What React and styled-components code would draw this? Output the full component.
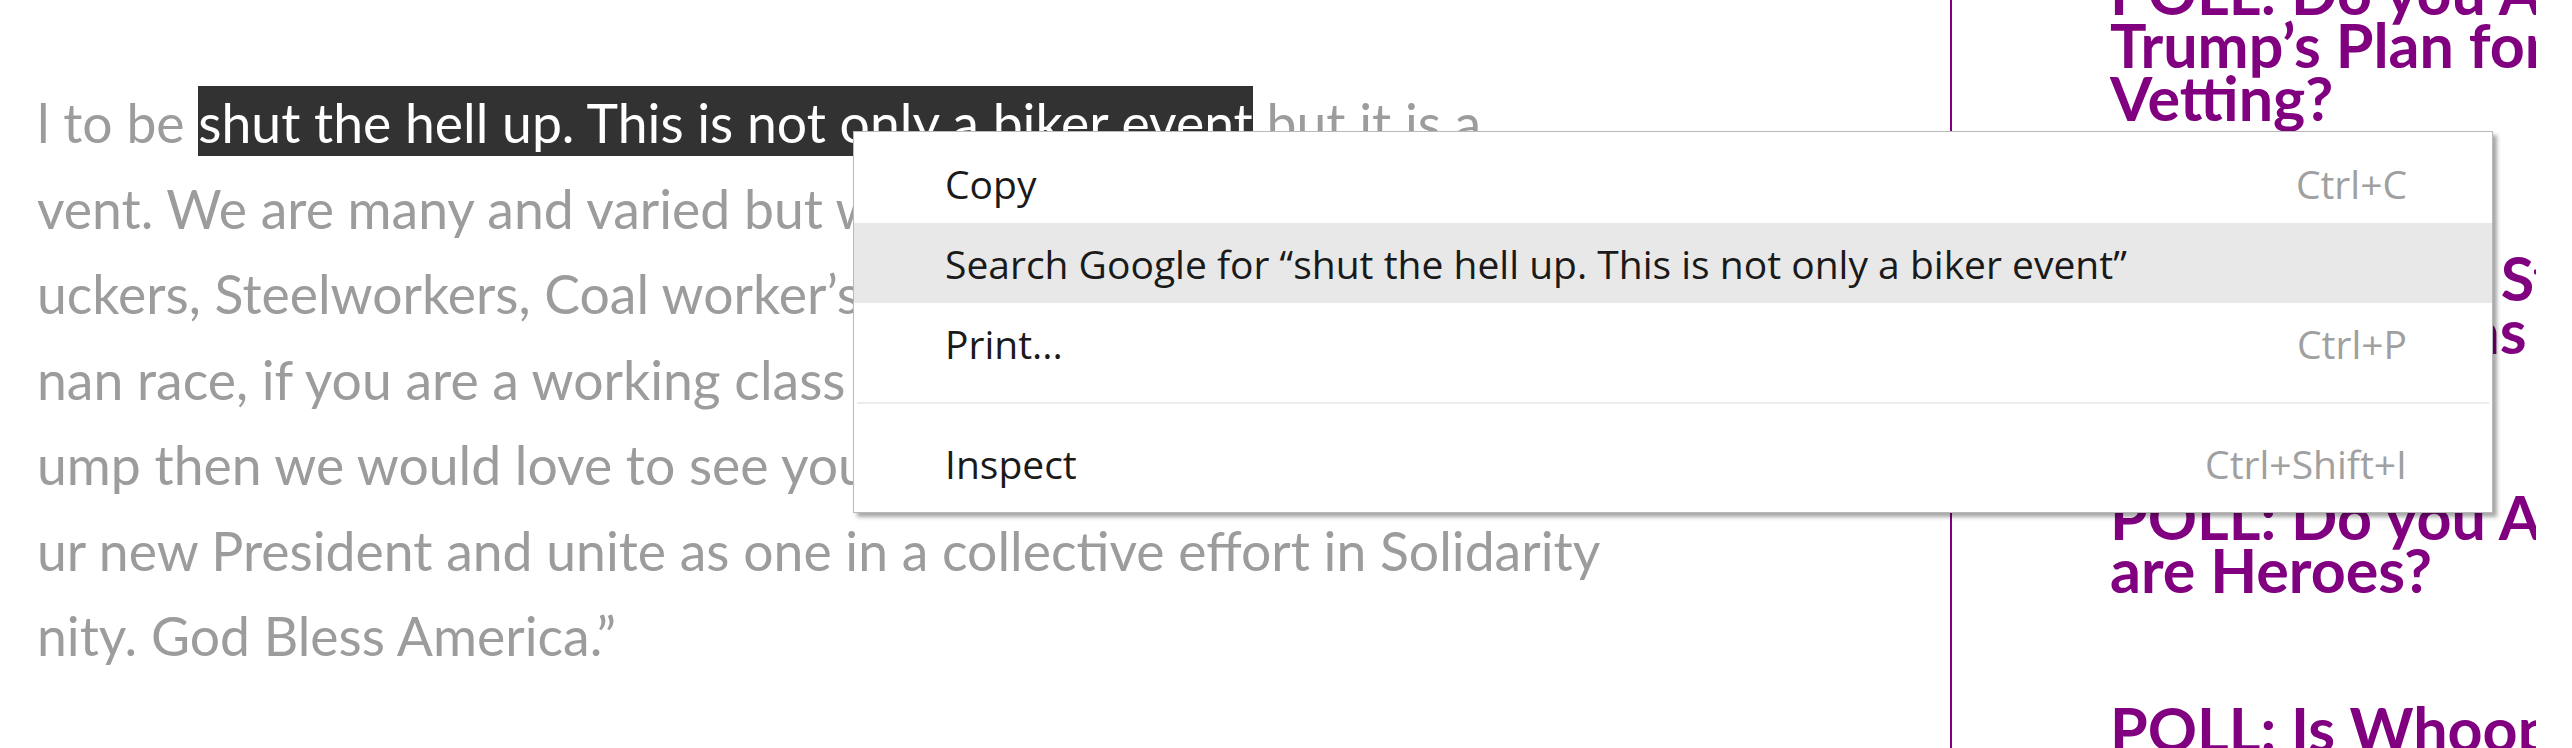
import styled, { createGlobalStyle } from "styled-components";

const GlobalStyle = createGlobalStyle`
  html, body {
    margin: 0;
    padding: 0;
    background: #fff;
  }
  body {
    width: 2572px;
    height: 748px;
    overflow: hidden;
  }
`;

const articleLines = [
  "vent. We are many and varied but we are all one people, united",
  "uckers, Steelworkers, Coal worker’s and all of the others",
  "nan race, if you are a working class American who supports",
  "ump then we would love to see you there on January 20th to",
  "ur new President and unite as one in a collective effort in Solidarity",
  "nity. God Bless America.”",
];

// space = distance from the previous poll title
const polls = [
  { space: 0, lines: ["POLL: Do you Approve of", "Trump’s Plan for Extreme", "Vetting?"] },
  { space: 127, lines: ["POLL: Do you Stand With", "Trump’s Plan as President?"] },
  { space: 133, lines: ["POLL: Do you Agree Police", "are Heroes?"] },
  { space: 106, lines: ["POLL: Is Whoopi Goldberg"] },
];

const menuItems = [
  { label: "Copy", shortcut: "Ctrl+C" },
  {
    label: "Search Google for \u201Cshut the hell up. This is not only a biker event\u201D",
    active: true,
  },
  { label: "Print...", shortcut: "Ctrl+P" },
  { separator: true },
  { label: "Inspect", shortcut: "Ctrl+Shift+I" },
];

function App() {
  return (
    <Page>
      <GlobalStyle />
      <Article>
        <Line>
          l to be <Selected>shut the hell up. This is not only a biker event</Selected> but it is a
        </Line>
        {articleLines.map((text, i) => (
          <Line key={i}>{text}</Line>
        ))}
      </Article>

      <Sidebar>
        <PollList>
          {polls.map((poll, i) => (
            <PollTitle key={i} $space={poll.space}>
              {poll.lines.map((l, j) => (
                <PollLine key={j}>{l}</PollLine>
              ))}
            </PollTitle>
          ))}
        </PollList>
      </Sidebar>

      <Menu>
        {menuItems.map((item, i) =>
          item.separator ? (
            <Separator key={i} />
          ) : (
            <MenuItem key={i} $active={item.active}>
              <span>{item.label}</span>
              {item.shortcut && <Shortcut>{item.shortcut}</Shortcut>}
            </MenuItem>
          )
        )}
      </Menu>
    </Page>
  );
}

export default App;

const Page = styled.div`
  position: relative;
  width: 2572px;
  height: 748px;
  display: flex;
  overflow: hidden;
  background: #fff;
`;

const Article = styled.div`
  width: 1914px;
  margin-left: 36px;
  padding-top: 80px;
  box-sizing: border-box;
  overflow: hidden;
  display: flex;
  flex-direction: column;
  font-family: "Lato", sans-serif;
  font-size: 53.5px;
  line-height: 85.5px;
  color: #9c9c9c;
`;

const Line = styled.div`
  white-space: nowrap;
  padding-left: 1px;
`;

const Selected = styled.span`
  background: #323232;
  color: #fff;
  padding: 4px 0 2px;
`;

const Sidebar = styled.div`
  width: 586px;
  height: 748px;
  border-left: 2px solid #800080;
  padding-left: 158px;
  box-sizing: border-box;
  overflow: hidden;
`;

const PollList = styled.div`
  display: flex;
  flex-direction: column;
  margin-top: -35px;
`;

const PollTitle = styled.div`
  margin-top: ${({ $space }) => $space}px;
  font-family: "Lato", sans-serif;
  font-weight: 700;
  font-size: 61px;
  line-height: 53px;
  color: #800080;
`;

const PollLine = styled.div`
  white-space: nowrap;
`;

const Menu = styled.div`
  position: absolute;
  left: 853px;
  top: 131px;
  width: 1640px;
  box-sizing: border-box;
  padding: 11px 0 9px;
  background: #fff;
  border: 1px solid #b9b9b9;
  box-shadow: 4px 4px 4px rgba(0, 0, 0, 0.35);
  font-family: "Open Sans", "Noto Sans", sans-serif;
  font-size: 39px;
  color: #1a1a1a;
`;

const MenuItem = styled.div`
  height: 80px;
  display: flex;
  align-items: center;
  justify-content: space-between;
  padding: 0 85px 0 91px;
  background: ${({ $active }) => ($active ? "#e8e8e8" : "transparent")};
  white-space: nowrap;
`;

const Shortcut = styled.span`
  color: #a0a0a0;
`;

const Separator = styled.div`
  height: 2px;
  margin: 19px 3px 19px;
  background: #ececec;
`;
